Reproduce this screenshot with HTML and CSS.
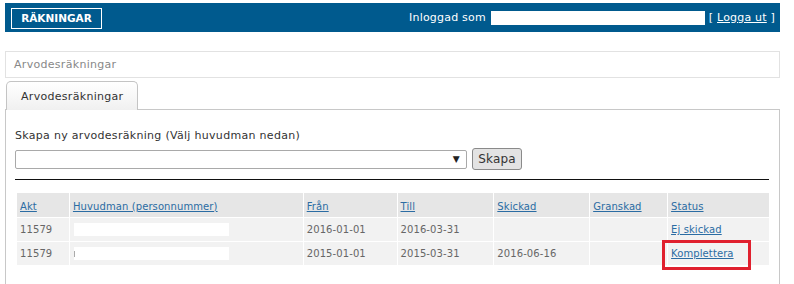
FILE: index.html
```html
<!DOCTYPE html>
<html>
<head>
<meta charset="utf-8">
<link rel="stylesheet" href="styles.css">
</head>
<body>
<div class="page">
  <div class="topbar">
    <span class="brand">RÄKNINGAR</span>
    <div class="user">
      <span class="user-label">Inloggad som</span>
      <span class="user-name"></span>
      <span class="logout">[ <a href="#">Logga ut</a> ]</span>
    </div>
  </div>
  <div class="crumb">Arvodesräkningar</div>
  <div class="tabs">
    <div class="tab">Arvodesräkningar</div>
  </div>
  <div class="panel">
    <div class="create-label">Skapa ny arvodesräkning (Välj huvudman nedan)</div>
    <div class="create-row">
      <div class="select"><span class="arrow">▼</span></div>
      <button class="btn">Skapa</button>
    </div>
    <div class="rule"></div>
    <table class="grid">
      <thead>
        <tr>
          <th class="c-akt"><a href="#">Akt</a></th>
          <th class="c-hm"><a href="#">Huvudman (personnummer)</a></th>
          <th class="c-fr"><a href="#">Från</a></th>
          <th class="c-ti"><a href="#">Till</a></th>
          <th class="c-sk"><a href="#">Skickad</a></th>
          <th class="c-gr"><a href="#">Granskad</a></th>
          <th class="c-st"><a href="#">Status</a></th>
        </tr>
      </thead>
      <tbody>
        <tr>
          <td>11579</td>
          <td><span class="redact"></span></td>
          <td>2016-01-01</td>
          <td>2016-03-31</td>
          <td></td>
          <td></td>
          <td><a href="#">Ej skickad</a></td>
        </tr>
        <tr>
          <td>11579</td>
          <td><span class="redact mark"></span></td>
          <td>2015-01-01</td>
          <td>2015-03-31</td>
          <td>2016-06-16</td>
          <td></td>
          <td class="hl"><a href="#">Komplettera</a><span class="hl-box"></span></td>
        </tr>
      </tbody>
    </table>
  </div>
</div>
</body>
</html>
```

FILE: styles.css
```css
html, body {
  margin: 0;
  padding: 0;
  background: #fff;
}
body {
  font-family: "DejaVu Sans", Verdana, sans-serif;
  font-size: 11px;
  color: #555;
  letter-spacing: 0.3px;
}
.page {
  width: 775px;
  padding: 3px 0 0 5px;
}
.topbar {
  height: 29px;
  background: #005a8e;
  display: flex;
  align-items: center;
  justify-content: space-between;
  padding: 0 5px 0 6px;
  box-sizing: border-box;
}
.brand {
  border: 1px solid #fff;
  color: #fff;
  font-weight: bold;
  width: 91px;
  height: 21px;
  box-sizing: border-box;
  display: flex;
  align-items: center;
  justify-content: center;
  font-size: 10.5px;
  letter-spacing: 0;
  margin-top: 1px;
}
.user {
  display: flex;
  align-items: center;
  color: #fff;
  font-size: 11px;
  letter-spacing: 0.2px;
}
.user-label {
  margin-right: 5px;
}
.user-name {
  display: inline-block;
  width: 214px;
  height: 14px;
  background: #fff;
  margin-right: 4px;
}
.logout a {
  color: #fff;
}
.crumb {
  margin-top: 19px;
  height: 27px;
  box-sizing: border-box;
  border: 1px solid #e2e2e2;
  color: #888;
  padding-left: 8px;
  display: flex;
  align-items: center;
}
.tabs {
  margin-top: 2px;
  padding-left: 1px;
  height: 29px;
  display: flex;
  align-items: flex-end;
}
.tab {
  width: 132px;
  height: 29px;
  box-sizing: border-box;
  border: 1px solid #c4c4c4;
  border-bottom: none;
  border-radius: 5px 5px 0 0;
  background: linear-gradient(#ffffff, #f0f0f0);
  color: #333;
  padding-left: 14px;
  display: flex;
  align-items: center;
  margin-bottom: -1px;
  position: relative;
  z-index: 1;
}
.panel {
  border: 1px solid #c8c8c8;
  border-bottom: none;
  padding: 19px 10px 0 9px;
  height: 155px;
}
.create-label {
  color: #333;
  margin-bottom: 6px;
}
.create-row {
  display: flex;
  align-items: center;
  gap: 5px;
}
.select {
  width: 452px;
  height: 19px;
  box-sizing: border-box;
  border: 1px solid #a9a9a9;
  border-radius: 2px;
  background: #fff;
  display: flex;
  align-items: center;
  justify-content: flex-end;
  padding-right: 6px;
}
.arrow {
  font-size: 9px;
  color: #222;
}
.btn {
  width: 50px;
  height: 22px;
  border: 1px solid #8a8a8a;
  border-radius: 3px;
  background: #e3e3e3;
  font-family: "DejaVu Sans", Verdana, sans-serif;
  font-size: 12px;
  letter-spacing: 0.2px;
  color: #333;
  padding: 0;
}
.rule {
  height: 1px;
  background: #111;
  margin-top: 9px;
  margin-bottom: 12px;
}
.grid {
  width: 754px;
  border-collapse: collapse;
  margin-left: 1px;
  font-size: 10px;
  letter-spacing: 0.1px;
}
.grid th, .grid td {
  text-align: left;
  height: 24px;
  padding: 0 0 0 3px;
  border: 1px solid #fff;
  font-weight: normal;
  color: #666;
  box-sizing: border-box;
}
.grid th {
  background: #e6e6e6;
  height: 25px;
  padding-top: 2px;
}
.grid td {
  background: #f2f2f2;
}
.grid a {
  color: #2b6ca3;
}
.c-akt { width: 53px; }
.c-hm { width: 234px; }
.c-fr { width: 94px; }
.c-ti { width: 97px; }
.c-sk { width: 96px; }
.c-gr { width: 78px; }
.c-st { width: 102px; }
.redact {
  display: inline-block;
  width: 155px;
  height: 13px;
  background: #fff;
  vertical-align: middle;
  margin-left: 1px;
  position: relative;
}
.redact.mark::before {
  content: "";
  position: absolute;
  left: 0;
  top: 4px;
  width: 1px;
  height: 6px;
  background: #aaa;
}
.hl {
  position: relative;
}
.hl-box {
  position: absolute;
  left: -6px;
  top: -2px;
  width: 89px;
  height: 30px;
  box-sizing: border-box;
  border: 3px solid #e0202e;
}
```
